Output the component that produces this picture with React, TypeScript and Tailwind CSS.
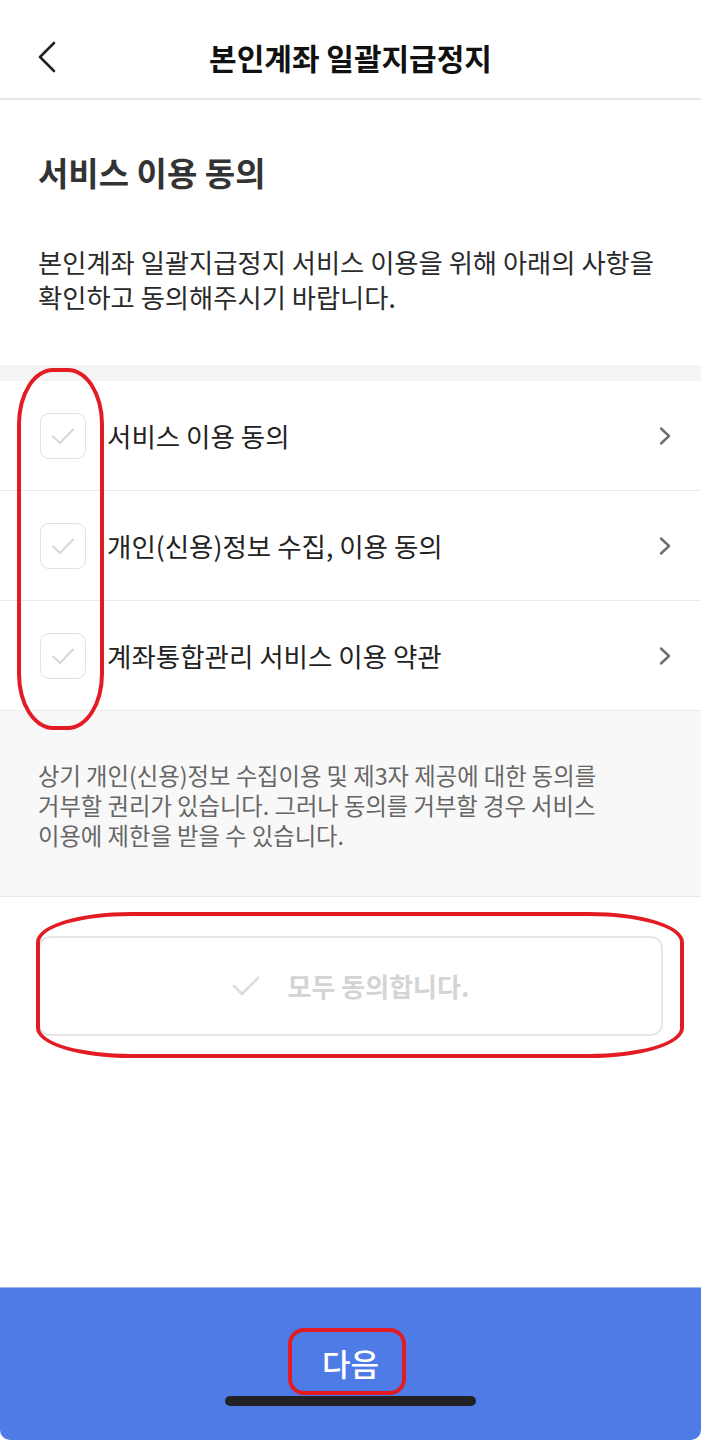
import React from "react";

const font = { fontFamily: '"Noto Sans CJK KR", "Noto Sans", sans-serif' };

function CheckBox() {
  return (
    <div className="w-[46px] h-[46px] shrink-0 rounded-[9px] border-[1.5px] border-[#e2e2e2] bg-white flex items-center justify-center">
      <svg width="26" height="20" viewBox="0 0 26 20" fill="none">
        <path d="M3 10.5 L10 17 L23 3.5" stroke="#d9d9d9" strokeWidth="2.2" strokeLinecap="round" strokeLinejoin="round" />
      </svg>
    </div>
  );
}

function Chevron() {
  return (
    <svg width="14" height="20" viewBox="0 0 14 20" fill="none">
      <path d="M3 2.5 L11 10 L3 17.5" stroke="#6e6e6e" strokeWidth="2.4" strokeLinecap="round" strokeLinejoin="round" />
    </svg>
  );
}

function Row({ label }: { label: string }) {
  return (
    <div className="h-[110px] border-b border-[#ebebeb] flex items-center pl-[40px] pr-[29px] bg-white">
      <CheckBox />
      <div className="ml-[21px] flex-1 text-[26.5px] leading-[34px] text-[#222222]">{label}</div>
      <Chevron />
    </div>
  );
}

export default function App() {
  return (
    <div className="relative w-[701px] min-h-[1440px] flex flex-col bg-white" style={font}>
      {/* Header */}
      <div className="relative h-[100px] shrink-0 border-b-2 border-[#e6e6e6] flex items-center justify-center">
        <div className="absolute left-[36px] top-[41px]">
          <svg width="22" height="32" viewBox="0 0 22 32" fill="none">
            <path d="M18 2 L4 16 L18 30" stroke="#222222" strokeWidth="2.6" strokeLinecap="round" strokeLinejoin="round" />
          </svg>
        </div>
        <div className="text-[30px] leading-[38px] font-semibold text-[#111111] mt-[16px]">본인계좌 일괄지급정지</div>
      </div>

      {/* Intro */}
      <div className="px-[38px] pt-[52px] pb-[51px]">
        <div className="text-[33px] leading-[40px] font-bold text-[#333333]">서비스 이용 동의</div>
        <div className="mt-[52px] text-[26.3px] leading-[35px] text-[#2a2a2a] whitespace-nowrap">
          본인계좌 일괄지급정지 서비스 이용을 위해 아래의 사항을
          <br />
          확인하고 동의해주시기 바랍니다.
        </div>
      </div>

      <div className="h-[16px] bg-[#f4f4f4]" />

      <Row label="서비스 이용 동의" />
      <Row label="개인(신용)정보 수집, 이용 동의" />
      <Row label="계좌통합관리 서비스 이용 약관" />

      {/* Notice */}
      <div className="bg-[#f8f8f8] border-b border-[#e8e8e8] px-[38px] pt-[49px] pb-[46px]">
        <div className="text-[23.3px] leading-[30px] text-[#666666] whitespace-nowrap">
          상기 개인(신용)정보 수집이용 및 제3자 제공에 대한 동의를
          <br />
          거부할 권리가 있습니다. 그러나 동의를 거부할 경우 서비스
          <br />
          이용에 제한을 받을 수 있습니다.
        </div>
      </div>

      {/* Agree all */}
      <div className="px-[38px] pt-[39px]">
        <div className="h-[100px] rounded-[12px] border-2 border-[#e6e6e6] flex items-center justify-center">
          <svg width="28" height="22" viewBox="0 0 28 22" fill="none" className="mr-[28px]">
            <path d="M2 11 L10 19 L26 3" stroke="#dcdcdc" strokeWidth="2.6" strokeLinecap="round" strokeLinejoin="round" />
          </svg>
          <span className="text-[26px] leading-[34px] font-bold text-[#d4d4d4]">모두 동의합니다.</span>
        </div>
      </div>

      <div className="flex-1" />

      {/* Footer */}
      <div className="h-[153px] shrink-0 bg-[#4e7be6] border-t border-[#9fb6ee] rounded-b-[10px] flex flex-col items-center">
        <div className="mt-[56px] text-[31px] leading-[38px] font-medium text-white">다음</div>
        <div className="mt-[14px] w-[251px] h-[10px] rounded-full bg-[#222226]" />
      </div>

      {/* Red annotations */}
      <div className="absolute left-[17px] top-[368px] w-[87px] h-[362px] border-[4px] border-[#e31b23] rounded-[36px/56px] pointer-events-none" />
      <div className="absolute left-[36px] top-[912px] w-[648px] h-[146px] border-[4px] border-[#e31b23] rounded-[95px/30px] pointer-events-none" />
      <div className="absolute left-[288px] top-[1328px] w-[118px] h-[67px] border-[4px] border-[#e31b23] rounded-[16px] pointer-events-none" />
    </div>
  );
}
